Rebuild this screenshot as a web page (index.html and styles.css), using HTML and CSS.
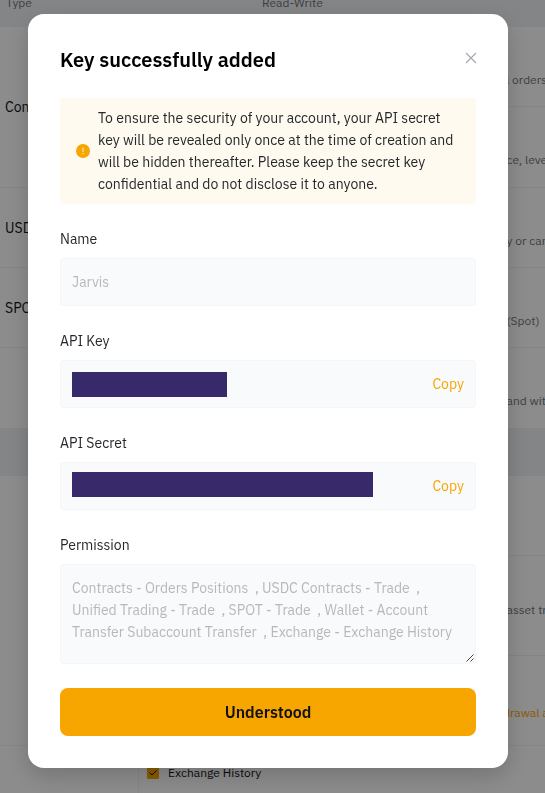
FILE: index.html
```
<!DOCTYPE html>
<html lang="en">
<head>
<meta charset="utf-8">
<title>API Key</title>
<link rel="stylesheet" href="styles.css">
</head>
<body>
<main class="page">
  <div class="table-head"><span>Type</span><span class="rw">Read-Write</span></div>
  <div class="table table-top">
    <div class="types">
      <div class="type tall">Contracts</div>
      <div class="type">USDC</div>
      <div class="type">SPOT</div>
      <div class="type last"></div>
    </div>
    <div class="details">
      <div class="detail"><span class="desc d-orders">l orders</span></div>
      <div class="detail"><span class="desc">ce, leverage</span></div>
      <div class="detail"><span class="desc">y or cancel</span></div>
      <div class="detail"><span class="desc">(Spot)</span></div>
      <div class="detail last"><span class="desc">and with</span></div>
    </div>
  </div>
  <div class="band"></div>
  <div class="table table-bottom">
    <div class="types"><div class="type wallet"></div></div>
    <div class="details">
      <div class="detail"></div>
      <div class="detail asset"><span class="desc">asset transfer</span></div>
      <div class="detail withdraw"><span class="desc">drawal address</span></div>
      <div class="detail exchange">
        <svg class="check" viewBox="0 0 12 12"><rect width="12" height="12" rx="1.5" fill="#f7a600"/><path d="M2.6 5.6 5 8 9.6 3.4" fill="none" stroke="#121214" stroke-width="1"/></svg>
        <span>Exchange History</span>
      </div>
    </div>
  </div>
</main>
<div class="overlay">
  <section class="modal">
    <header class="modal-head">
      <h1>Key successfully added</h1>
      <svg class="close" viewBox="0 0 12 12"><path d="M1 1 11 11M11 1 1 11" fill="none" stroke="#a3a7af" stroke-width="1.2"/></svg>
    </header>
    <div class="notice">
      <svg class="warn" viewBox="0 0 14 14"><circle cx="7" cy="7" r="7" fill="#f7a600"/><path d="M7 3.6v4.2M7 9v1.2" stroke="#fff3d6" stroke-width="1"/></svg>
      <p><span>To ensure the security of your account, your API secret</span><span>key will be revealed only once at the time of creation and</span><span>will be hidden thereafter. Please keep the secret key</span><span>confidential and do not disclose it to anyone.</span></p>
    </div>
    <div class="label">Name</div>
    <div class="field"><span class="value">Jarvis</span></div>
    <div class="label">API Key</div>
    <div class="field"><span class="mask"></span><span class="copy">Copy</span></div>
    <div class="label">API Secret</div>
    <div class="field"><span class="mask mask-long"></span><span class="copy">Copy</span></div>
    <div class="label">Permission</div>
    <div class="area">
      <span>Contracts - Orders Positions&nbsp; , USDC Contracts - Trade&nbsp; ,</span><span>Unified Trading - Trade&nbsp; , SPOT - Trade&nbsp; , Wallet - Account</span><span>Transfer Subaccount Transfer&nbsp; , Exchange - Exchange History</span>
      <svg class="grip" viewBox="0 0 8 8"><path d="M.5 7.5 7.5.5M4.5 7.5 7.5 4.5" fill="none" stroke="#444" stroke-width="1"/></svg>
    </div>
    <button class="submit">Understood</button>
  </section>
</div>
</body>
</html>
```
FILE: styles.css
```
* { box-sizing: border-box; }
body { margin: 0; height: 793px; overflow: hidden; background: #fff; color: #121214; font: 14px/22px "IBM Plex Sans", Roboto, sans-serif; }
.page { width: 545px; height: 793px; overflow: hidden; white-space: nowrap; }
.table-head { height: 27px; background: #eff2f5; color: #71757b; font-size: 12px; line-height: 6px; padding-left: 6px; display: flex; }
.rw { margin-left: 230px; }
.table { display: grid; grid-template-columns: 139px 406px; }
.table-top { height: 401px; }
.table-bottom { height: 317px; }
.types { border-right: 1px solid #f1f2f4; }
.type { height: 80.3px; padding: 1px 0 0 5px; display: flex; align-items: center; border-bottom: 1px solid #f1f2f4; }
.type.tall { height: 160.5px; padding-top: 0; }
.type.wallet { height: 269.5px; }
.detail { height: 80.3px; padding: 42px 0 0 367.5px; border-bottom: 1px solid #f1f2f4; color: #71757b; font-size: 12px; overflow: hidden; }
.type.last, .detail.last { border: 0; }
.d-orders { margin-left: -.5px; }
.band { height: 48px; background: #eff2f5; }
.detail.asset { height: 99.4px; padding-top: 42.6px; }
.detail.withdraw { height: 90px; padding-top: 46px; padding-left: 364px; color: #f7a600; }
.detail.exchange { padding: 16px 0 0 8px; color: #121214; border: 0; display: flex; gap: 9px; }
.check { width: 12px; height: 12px; margin-top: 5px; }
.overlay { position: fixed; inset: 0; padding: 14px 28px; background: rgba(0,0,0,.45); }
.modal { width: 480px; height: 754px; padding: 32px; border-radius: 16px; background: #fff; box-shadow: 0 8px 24px rgba(0,0,0,.18); }
.modal-head { height: 52px; display: flex; justify-content: space-between; }
h1 { margin: 0; font-size: 20px; line-height: 28px; font-weight: 600; color: #000; white-space: nowrap; }
.close { width: 12px; height: 12px; margin-top: 6px; margin-right: -1px; }
.notice { height: 106px; padding: 0 16px; border-radius: 4px; background: #fffaef; display: flex; align-items: center; gap: 8px; }
.warn { width: 14px; height: 14px; flex: none; }
.notice p { margin: 0; color: #25282c; }
.notice span { display: block; width: max-content; white-space: nowrap; }
.label { margin-top: 24px; height: 22px; width: max-content; color: #25282c; }
.field { height: 48px; margin-top: 8px; padding: 0 11px; border: 1px solid #f3f5f7; border-radius: 4px; background: #f9fafc; display: flex; align-items: center; justify-content: space-between; }
.value { color: #b6b8bd; }
.copy { color: #f7a600; }
.mask { width: 155px; height: 25px; background: #38296b; }
.mask-long { width: 301px; margin-bottom: 3px; }
.area { position: relative; height: 100px; margin-top: 8px; padding: 12px 11px; border: 1px solid #f3f5f7; border-radius: 4px; background: #f9fafc; color: #b6b8bd; }
.area span { display: block; width: max-content; white-space: nowrap; }
.grip { position: absolute; right: 1px; bottom: 1px; width: 8px; height: 8px; }
.submit { display: block; width: 100%; height: 48px; margin-top: 24px; border: 0; border-radius: 8px; background: #f7a600; color: #121214; font: 600 16px/24px "IBM Plex Sans", Roboto, sans-serif; }
```
